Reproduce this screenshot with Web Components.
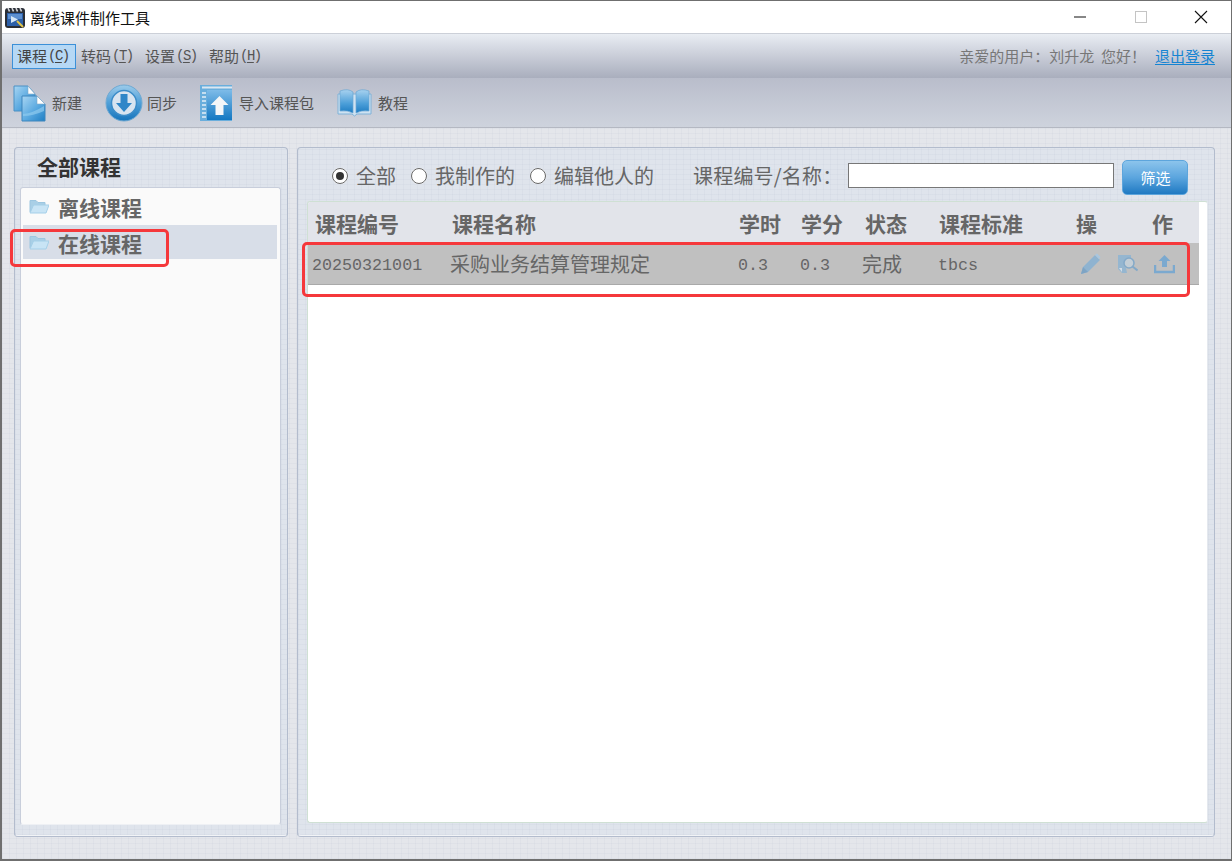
<!DOCTYPE html>
<html lang="zh">
<head>
<meta charset="utf-8">
<title>离线课件制作工具</title>
<style>
  html, body { margin: 0; height: 100%; overflow: hidden; }
  body { font-family: "Noto Sans CJK SC", sans-serif; }
</style>
</head>
<body>
<app-window>
  <title-bar></title-bar>
  <menu-bar></menu-bar>
  <tool-bar>
    <tool-button icon="new" label="新建" gap="6"></tool-button>
    <tool-button icon="sync" label="同步" gap="4"></tool-button>
    <tool-button icon="import" label="导入课程包" gap="6"></tool-button>
    <tool-button icon="book" label="教程" gap="6"></tool-button>
  </tool-bar>
  <main-area>
    <course-tree></course-tree>
    <course-list></course-list>
  </main-area>
</app-window>

<script>
(function() {

    // Small helper: every element gets an open shadow root from its own template.
    function define(name, html, setup) {
        const template = document.createElement('template');
        template.innerHTML = html;
        customElements.define(name, class extends HTMLElement {
            constructor() {
                super();
                this.attachShadow({mode: 'open'});
                this.shadowRoot.appendChild(template.content.cloneNode(true));
            }
            connectedCallback() {
                if (setup) setup(this, this.shadowRoot);
            }
        });
    }

    const CJK = '"Noto Sans CJK SC", sans-serif';
    const MONO = '"Liberation Mono", "Noto Sans CJK SC", monospace';
    const CLOTH = `repeating-linear-gradient(0deg, rgba(150,160,185,.07) 0 1px, transparent 1px 5px),
                   repeating-linear-gradient(90deg, rgba(150,160,185,.07) 0 1px, transparent 1px 7px)`;

    const ICONS = {
        new: `<svg width="33" height="38" viewBox="0 0 33 38">
            <defs><linearGradient id="n" x1="0" y1="0" x2="1" y2="1"><stop offset="0" stop-color="#a9d6f3"/><stop offset=".55" stop-color="#5aa9e0"/><stop offset="1" stop-color="#1f7fc4"/></linearGradient></defs>
            <path d="M1 2h14l7 8v17H1z" fill="url(#n)" stroke="#4a90c4"/>
            <path d="M15 2l7 8h-7z" fill="#fff" stroke="#7fa9c8" stroke-width=".6"/>
            <path d="M9 12h15l8 8v17H9z" fill="url(#n)" stroke="#3f86bd"/>
            <path d="M24 12l8 8h-8z" fill="#fff" stroke="#7fa9c8" stroke-width=".6"/>
            <path d="M10 30q10-1 21-8v5q-11 5-21 5z" fill="#8fcaee" opacity=".7"/></svg>`,
        sync: `<svg width="38" height="38" viewBox="0 0 38 38">
            <defs><linearGradient id="s" x1="0" y1="0" x2="0" y2="1"><stop offset="0" stop-color="#9ccbea"/><stop offset=".5" stop-color="#4f9fd8"/><stop offset="1" stop-color="#1674bb"/></linearGradient></defs>
            <circle cx="19" cy="19" r="18" fill="url(#s)" stroke="#6fa9d2"/>
            <circle cx="19" cy="19" r="12.500" fill="#d8e4f0" stroke="#3c8cc8" stroke-width="1.500"/>
            <path d="M15.500 10h7v9h4.500L19 28l-8-9h4.500z" fill="#2f86c8"/></svg>`,
        import: `<svg width="33" height="36" viewBox="0 0 33 36">
            <defs><linearGradient id="i" x1="0" y1="0" x2="0" y2="1"><stop offset="0" stop-color="#7dbbe8"/><stop offset="1" stop-color="#1478c2"/></linearGradient></defs>
            <rect x="0" y="0" width="32" height="36" fill="#6aaedc"/>
            <rect x="2" y="1.500" width="30" height="2" fill="#dbe7f1"/>
            <rect x="7" y="5" width="25" height="30" fill="url(#i)"/>
            <path d="M2 8h4M2 12h4M2 16h4M2 20h4M2 24h4M2 28h4M2 32h4" stroke="#e4eef6" stroke-width="1.500"/>
            <path d="M19.500 11l9 9h-5v10h-8V20h-5z" fill="#f4f6f8"/></svg>`,
        book: `<svg width="35" height="30" viewBox="0 0 35 30">
            <defs><linearGradient id="b" x1="0" y1="0" x2="0" y2="1"><stop offset="0" stop-color="#a8d2ef"/><stop offset=".6" stop-color="#4b9ed8"/><stop offset="1" stop-color="#1e7cc2"/></linearGradient></defs>
            <path d="M1 6v20h14l2.500 2 2.500-2h14V6z" fill="#cfe2f1" stroke="#7fb2d8"/>
            <path d="M3 3q8-3 13 1v21q-5-3-13-2z" fill="url(#b)" stroke="#6aa6d2" stroke-width=".7"/>
            <path d="M32 3q-8-3-13 1v21q5-3 13-2z" fill="url(#b)" stroke="#6aa6d2" stroke-width=".7"/></svg>`
    };

    define('app-window', `
        <style>
          :host { display: flex; flex-direction: column; height: 861px; box-sizing: border-box;
                  border: 1px solid #6f6f6f; border-width: 1px 1px 2px 2px; }
        </style>
        <slot></slot>`);

    define('title-bar', `
        <style>
          :host { display: flex; align-items: center; height: 32px; flex: none; background: #fff;
                  border-bottom: 1px solid #ccd0d8; font: 15px ${CJK}; color: #111; }
          .logo { margin: 0 5px 0 3px; flex: none; }
          .name { flex: 1; }
          .btn { width: 60px; height: 32px; display: flex; align-items: center; justify-content: center; }
        </style>
        <svg class="logo" width="20" height="21" viewBox="0 0 20 21">
          <rect x="0" y="1" width="20" height="20" rx="3" fill="#2a2e36"/>
          <path d="M3 1l1.500 3.500M7 1l1.500 3.500M11 1l1.500 3.500M15 1l1.500 3.500" stroke="#d4d6da" stroke-width="1.600"/>
          <rect x="2" y="6" width="16" height="13" fill="#2c5fa8"/>
          <path d="M3 7h14v5H3z" fill="#5c8fd0"/>
          <path d="M6 9l7 3.500-7 3.500z" fill="#d5e6f6"/>
          <path d="M12 14l6 6" stroke="#e3c64a" stroke-width="2"/>
        </svg>
        <span class="name">离线课件制作工具</span>
        <span class="btn"><svg width="14" height="2"><rect width="12" height="1" y="0.500" fill="#111"/></svg></span>
        <span class="btn"><svg width="13" height="13"><rect x=".5" y=".5" width="11" height="11" fill="none" stroke="#c4c4c4"/></svg></span>
        <span class="btn"><svg width="14" height="14"><path d="M1 1l12 12M13 1L1 13" stroke="#111" stroke-width="1.100"/></svg></span>`);

    define('menu-bar', `
        <style>
          :host { display: flex; align-items: center; height: 44px; flex: none; box-sizing: border-box;
                  padding: 0 16px 0 10px; font: 15px/22px ${CJK}; color: #555;
                  background: linear-gradient(#e9edf3, #c9cdd8 50%, #a9aebd); }
          .item { padding: 0 6px 0 4px; width: 64px; height: 25px; box-sizing: border-box; border: 1px solid transparent;
                  white-space: nowrap; display: flex; align-items: center; flex: none; }
          .item.on { background: #b6d8f5; border-color: #3c90d8; color: #444; }
          .key { font: 14px ${MONO}; margin-left: 1px; letter-spacing: -1.500px; }
          .key u { text-underline-offset: 2px; }
          .grow { flex: 1; }
          .user { color: #777; white-space: pre; font-size: 15px; }
          a { color: #1584d2; margin-left: 9px; text-decoration: underline; text-underline-offset: 2px; }
        </style>
        <span class="item on">课程<span class="key">(<u>C</u>)</span></span>
        <span class="item">转码<span class="key">(<u>T</u>)</span></span>
        <span class="item">设置<span class="key">(<u>S</u>)</span></span>
        <span class="item">帮助<span class="key">(<u>H</u>)</span></span>
        <span class="grow"></span>
        <span class="user">亲爱的用户：刘升龙  您好！</span>
        <a href="#">退出登录</a>`);

    define('tool-bar', `
        <style>
          :host { display: flex; align-items: center; gap: 23px; height: 50px; flex: none; box-sizing: border-box;
                  padding: 0 0 0 11px; background: linear-gradient(#b9bdcb, #ced3dd);
                  border-bottom: 1px solid #b4b8c2; }
        </style>
        <slot></slot>`);

    define('tool-button', `
        <style>
          :host { display: flex; align-items: center; font: 15px ${CJK}; color: #555; }
          span { white-space: nowrap; }
        </style>
        <span id="icon" style="display:flex"></span><span id="label"></span>`,
        function(el, root) {
            root.getElementById('icon').innerHTML = ICONS[el.getAttribute('icon')];
            root.getElementById('label').textContent = el.getAttribute('label');
            root.getElementById('label').style.marginLeft = el.getAttribute('gap') + 'px';
        });

    define('main-area', `
        <style>
          :host { flex: 1; display: flex; gap: 9px; min-height: 0; box-sizing: border-box;
                  padding: 19px 16px 23px 12px; background-color: #e4e6eb; background-image: ${CLOTH}; }
        </style>
        <slot></slot>`);

    define('panel-box', `
        <style>
          :host { display: flex; flex-direction: column; box-sizing: border-box; height: 100%;
                  border: 1px solid #b3bccd; border-bottom-color: #f2f4f7; border-radius: 4px;
                  background-color: #dfe4ec; background-image: ${CLOTH}; box-shadow: 0 1px 0 #b3bccd; }
        </style>
        <slot></slot>`);

    define('course-tree', `
        <style>
          :host { display: block; width: 274px; flex: none; }
          .title { height: 39px; box-sizing: border-box; padding: 0 0 4px 22px; display: flex; align-items: center;
                   font: 700 21px ${CJK}; color: #333; }
          .list { flex: 1; margin: 0 6px 10px 5px; padding: 3px 3px 0 2px; background: #fafafa;
                  border: 1px solid #c8cedb; border-radius: 3px; border-bottom-color: #eef0f4; }
        </style>
        <panel-box>
          <div class="title">全部课程</div>
          <div class="list">
            <tree-item>离线课程</tree-item>
            <tree-item selected>在线课程</tree-item>
          </div>
        </panel-box>`);

    define('tree-item', `
        <style>
          :host { display: flex; align-items: center; gap: 9px; height: 32px; padding: 0 0 2px 6px;
                  font: 700 21px ${CJK}; color: #666; }
          :host([selected]) { background: #d8dee8; padding: 2px 0 0 6px; }
          svg { flex: none; margin-top: -3px; }
        </style>
        <svg width="20" height="16" viewBox="0 0 20 16">
          <path d="M1 14V2.500h6l2 2h7V7" fill="#a9cfe6" stroke="#9cc6e0"/>
          <path d="M1 15l3.500-8H20l-3 8z" fill="#c8e4f5" stroke="#a4cfe8"/>
        </svg>
        <slot></slot>`);

    define('course-list', `
        <style>
          :host { display: block; flex: 1; min-width: 0; }
          .table { flex: 1; margin: 0 6px 12px 9px; background: #fff; border: 1px solid #cfe0d4;
                   border-right-color: #e4e8ee; border-radius: 3px; overflow: hidden; }
        </style>
        <panel-box>
          <filter-bar></filter-bar>
          <div class="table">
            <table-head></table-head>
            <table-row></table-row>
          </div>
        </panel-box>`);

    define('radio-opt', `
        <style>
          :host { display: flex; align-items: center; gap: 8px; font: 20px ${CJK}; color: #666; white-space: nowrap; }
          i { width: 16px; height: 16px; box-sizing: border-box; border-radius: 50%; border: 1.500px solid #666;
              background: #fff; display: flex; align-items: center; justify-content: center;
              box-shadow: 0 0 1px #fff; }
          :host([checked]) i::after { content: ""; width: 8px; height: 8px; border-radius: 50%; background: #333; }
        </style>
        <i></i><slot></slot>`);

    define('filter-bar', `
        <style>
          :host { display: flex; align-items: center; height: 53px; flex: none; box-sizing: border-box;
                  padding: 2px 0 0 34px; font: 20px ${CJK}; color: #666; }
          radio-opt { margin-right: 15px; }
          .label { margin-left: 24px; white-space: nowrap; letter-spacing: .2px; }
          .input { width: 266px; height: 25px; box-sizing: border-box; margin-left: 6px;
                   background: #fff; border: 1.500px solid #777; }
          .go { width: 66px; height: 35px; box-sizing: border-box; margin: 3px 0 0 8px; border-radius: 5px;
                border: 1px solid #5da5dc; color: #fff; font: 15px ${CJK};
                background: linear-gradient(#8cc4ec, #5ba5de 50%, #1f79c2);
                display: flex; align-items: center; justify-content: center; }
        </style>
        <radio-opt checked>全部</radio-opt>
        <radio-opt>我制作的</radio-opt>
        <radio-opt>编辑他人的</radio-opt>
        <span class="label">课程编号/名称：</span>
        <span class="input"></span>
        <span class="go">筛选</span>`);

    define('table-head', `
        <style>
          :host { display: grid; grid-template-columns: 137px 287px 62px 64px 74px 137px 76px 1fr; align-items: center;
                  height: 41px; margin-right: 8px; padding-left: 7px; background: #e2e4ea;
                  font: 700 21px ${CJK}; color: #666; }
        </style>
        <span>课程编号</span><span>课程名称</span><span>学时</span><span>学分</span>
        <span>状态</span><span>课程标准</span><span>操</span><span>作</span>`);

    define('table-row', `
        <style>
          :host { display: grid; grid-template-columns: 138px 288px 62px 62px 76px 142px 1fr; align-items: center;
                  height: 42px; box-sizing: border-box; margin-right: 8px; padding-left: 4px;
                  background: #c0c0c0; border-bottom: 1px solid #a9a9a9; font: 20px ${CJK}; color: #666; }
          .m { font: 16.700px ${MONO}; padding-top: 3px; }
          .ops { display: flex; align-items: center; gap: 16px; padding-top: 1px; }
        </style>
        <span class="m">20250321001</span><span>采购业务结算管理规定</span>
        <span class="m">0.3</span><span class="m">0.3</span><span>完成</span>
        <span class="m">tbcs</span>
        <span class="ops">
          <svg width="21" height="22" viewBox="0 0 21 22"><path d="M1 21l2-7L15 2l5 5L8 19z" fill="#8fb3d0"/><path d="M15 2l2-1.500 3.500 3.500L19 6z" fill="#a9c6de"/><path d="M1 21l2-7 5 5z" fill="#7ea4c4"/></svg>
          <svg width="21" height="22" viewBox="0 0 21 22"><path d="M1 2h13v3a6 6 0 0 0-5 10l1 5H5l-4-4z" fill="#95b6d0"/><path d="M2 15l3 4v-4z" fill="#d4dde6"/><circle cx="12" cy="10" r="5" fill="#c4ced6" stroke="#84a9c8" stroke-width="1.500"/><path d="M15.500 13.500l5 4" stroke="#84a9c8" stroke-width="2"/></svg>
          <svg width="21" height="20" viewBox="0 0 21 20"><path d="M10.500 1l6 6h-3.500v6H8V7H4.500z" fill="#7ba9cf"/><path d="M1 11v7h19v-7" fill="none" stroke="#7ba9cf" stroke-width="2.500"/></svg>
        </span>`);

    define('red-mark', `
        <style>
          :host { position: fixed; box-sizing: border-box; border: 3px solid #f5383b; border-radius: 5px; pointer-events: none; }
        </style>`);

    // the two red highlights drawn on top of the screenshot
    [[10, 229, 159, 38], [302, 242, 888, 55]].forEach(function(r) {
        const mark = document.createElement('red-mark');
        mark.style.left = r[0] + 'px';
        mark.style.top = r[1] + 'px';
        mark.style.width = r[2] + 'px';
        mark.style.height = r[3] + 'px';
        document.body.appendChild(mark);
    });

})();
</script>
</body>
</html>
